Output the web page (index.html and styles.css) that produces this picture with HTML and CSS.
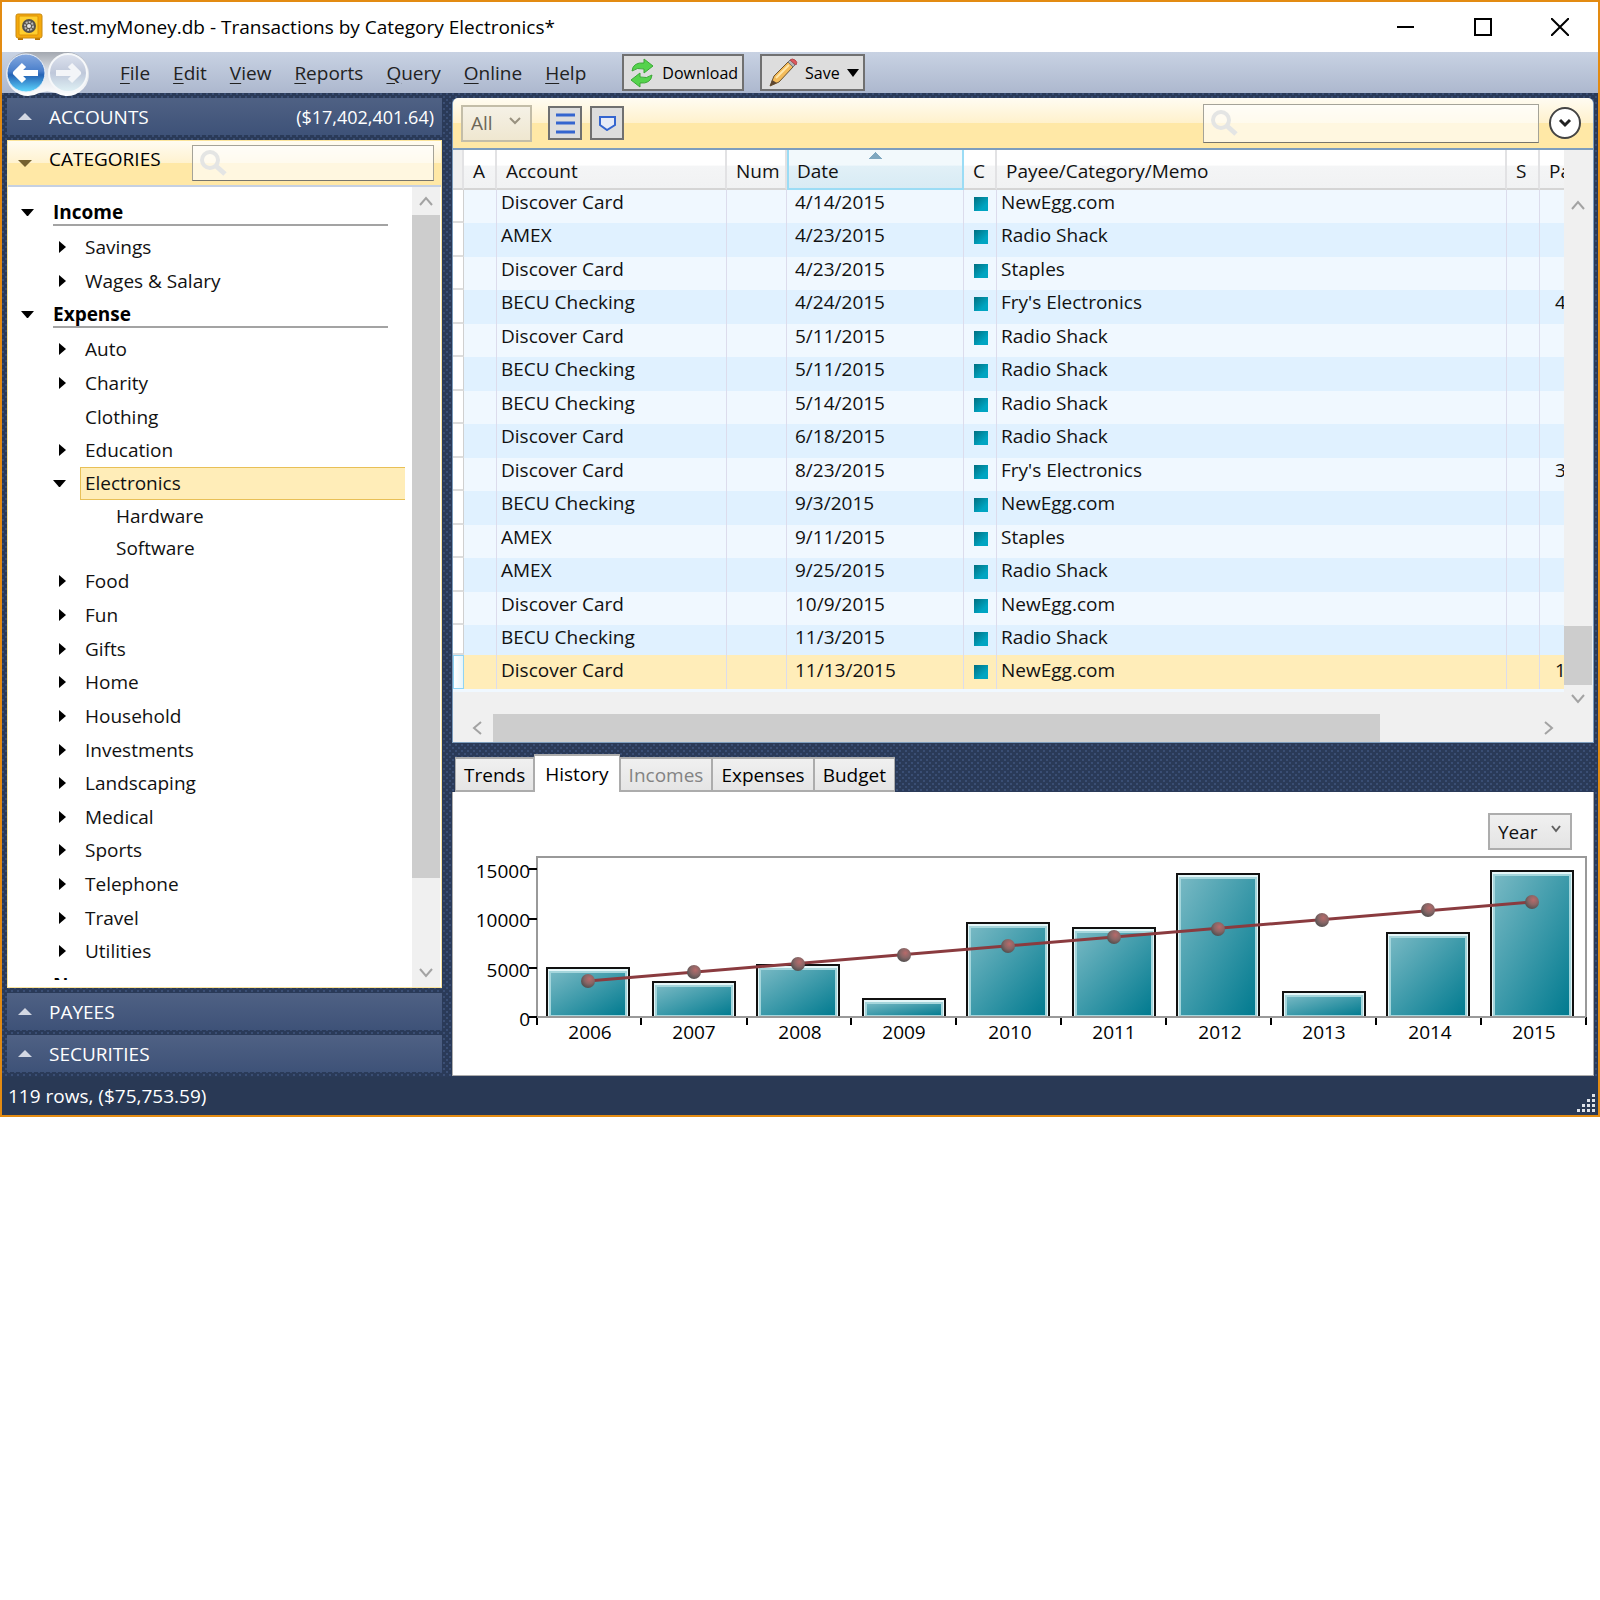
FILE: index.html
```
<!DOCTYPE html>
<html lang="en">
<head>
  <meta charset="UTF-8" />
  <meta name="viewport" content="width=device-width, initial-scale=1" />
  <title>test.myMoney.db</title>
  <link rel="stylesheet" href="styles.css">
</head>
<body>
  <div class="window">
    <header class="titlebar">
      <svg class="app-icon" width="28" height="28" viewBox="0 0 28 28">
        <rect x="3" y="24" width="5" height="3" fill="#b87300"/>
        <rect x="20" y="24" width="5" height="3" fill="#b87300"/>
        <rect x="1" y="1" width="26" height="24" rx="2" fill="#f5a90c" stroke="#c98a12"/>
        <rect x="4" y="3" width="19" height="19" rx="1" fill="#ffcf2e" stroke="#dd9408"/>
        <circle cx="14" cy="13" r="7" fill="#55524c"/>
        <circle cx="14" cy="13" r="4" fill="none" stroke="#b9b9b9" stroke-width="2" stroke-dasharray="2 1"/>
        <circle cx="14" cy="13" r="2" fill="#e6e6e6"/>
      </svg>
      <h1>test.myMoney.db - Transactions by Category Electronics*</h1>
      <div class="window-buttons">
        <button aria-label="Minimize"><svg width="18" height="18" viewBox="0 0 18 18"><path d="M0 9h17" stroke="#000" stroke-width="2"/></svg></button>
        <button aria-label="Maximize"><svg width="18" height="18" viewBox="0 0 18 18"><path d="M1 1h16v16H1z" fill="none" stroke="#000" stroke-width="2"/></svg></button>
        <button aria-label="Close"><svg width="18" height="18" viewBox="0 0 18 18"><path d="M0 0l18 18M18 0L0 18" stroke="#000" stroke-width="2"/></svg></button>
      </div>
    </header>

    <nav class="menubar">
      <div class="history-nav">
        <svg class="history-back" width="88" height="46" viewBox="0 0 88 46">
          <defs>
            <linearGradient id="blue" x1="0" y1="0" x2="0" y2="1">
              <stop offset="0" stop-color="#86a9df"/><stop offset=".45" stop-color="#4a7fcb"/>
              <stop offset=".55" stop-color="#2563b5"/><stop offset="1" stop-color="#5fd8ff"/>
            </linearGradient>
            <linearGradient id="pale" x1="0" y1="0" x2="0" y2="1">
              <stop offset="0" stop-color="#dde2ee"/><stop offset=".5" stop-color="#bfc8da"/>
              <stop offset="1" stop-color="#e0f2f6"/>
            </linearGradient>
            <linearGradient id="ring" x1="0" y1="0" x2="0" y2="1">
              <stop offset="0" stop-color="#a3a8b0"/><stop offset=".4" stop-color="#d9dde3"/>
              <stop offset="1" stop-color="#fff"/>
            </linearGradient>
          </defs>
          <path d="M23 0H65A22 22 0 1 1 53 41Q44 38 36 41A22 22 0 1 1 23 0z" fill="url(#ring)"/>
          <circle cx="23" cy="21" r="19" fill="url(#blue)" stroke="#e9f0f9"/>
          <circle cx="65" cy="21" r="19" fill="url(#pale)" stroke="#f6f8fa" stroke-width="2"/>
          <path d="M35 21H13M21 13l-8 8 8 8" fill="none" stroke="#fff" stroke-width="6" stroke-linejoin="round"/>
          <path d="M53 21h22M67 13l8 8-8 8" fill="none" stroke="#f3f5f8" stroke-width="6" stroke-linejoin="round"/>
        </svg>
        <button aria-label="Back"></button>
        <button aria-label="Forward"></button>
      </div>
      <ul class="menu">
        <li><a href="#"><u>F</u>ile</a></li>
        <li><a href="#"><u>E</u>dit</a></li>
        <li><a href="#"><u>V</u>iew</a></li>
        <li><a href="#"><u>R</u>eports</a></li>
        <li><a href="#"><u>Q</u>uery</a></li>
        <li><a href="#"><u>O</u>nline</a></li>
        <li><a href="#"><u>H</u>elp</a></li>
      </ul>
      <button class="tool tool-download">
        <svg width="24" height="30" viewBox="0 0 24 30">
          <path d="M2 13Q3 4 14 5V1l9 7-9 7v-4Q7 9 2 13z" fill="#55d34c" stroke="#3aa835"/>
          <path d="M22 17Q21 26 10 25v4l-9-7 9-7v4Q17 21 22 17z" fill="#55d34c" stroke="#3aa835"/>
        </svg>
        Download
      </button>
      <button class="tool tool-save">
        <svg width="30" height="30" viewBox="0 0 30 30">
          <path d="M2 28l4-10L20 4l5 5L11 24z" fill="#f3bb5a" stroke="#6b5330"/>
          <path d="M8 20L21 7" stroke="#ffe6a8" stroke-width="2"/>
          <path d="M2 28l2-6 5 3z" fill="#5d4630"/>
          <path d="M20 4l2-2 5 5-2 2z" fill="#b5b5b5" stroke="#777"/>
          <path d="M22 2q2-2 5 0t1 5z" fill="#e0575c" stroke="#b54a4e"/>
        </svg>
        Save
        <svg width="12" height="8" viewBox="0 0 12 8"><path d="M0 0h12L6 8z"/></svg>
      </button>
    </nav>

    <div class="content">
      <aside class="sidebar">
        <button class="section"><i class="up"></i>ACCOUNTS<span class="amount">($17,402,401.64)</span></button>

        <section class="categories">
          <div class="categories-head">
            <i class="down"></i>
            <h2>CATEGORIES</h2>
            <label class="search">
              <svg width="28" height="28" viewBox="0 0 28 28"><circle cx="11" cy="11" r="8" fill="none" stroke="#e4e5e4" stroke-width="4"/><path d="M17 17l9 8" stroke="#e4e5e4" stroke-width="5"/></svg>
              <input type="text" aria-label="Search categories">
            </label>
          </div>
          <div class="categories-body">
            <ul class="tree">
              <li class="group"><div class="node"><i class="open"></i>Income</div>
                <ul>
                  <li><div class="node"><i class="closed"></i>Savings</div></li>
                  <li class="short"><div class="node"><i class="closed"></i>Wages &amp; Salary</div></li>
                </ul>
              </li>
              <li class="group"><div class="node"><i class="open"></i>Expense</div>
                <ul>
                  <li><div class="node"><i class="closed"></i>Auto</div></li>
                  <li><div class="node"><i class="closed"></i>Charity</div></li>
                  <li class="short"><div class="node"><i></i>Clothing</div></li>
                  <li><div class="node"><i class="closed"></i>Education</div></li>
                  <li class="short"><div class="node selected"><i class="open"></i><span>Electronics</span></div>
                    <ul>
                      <li><div class="node">Hardware</div></li>
                      <li><div class="node">Software</div></li>
                    </ul>
                  </li>
                  <li><div class="node"><i class="closed"></i>Food</div></li>
                  <li><div class="node"><i class="closed"></i>Fun</div></li>
                  <li class="short"><div class="node"><i class="closed"></i>Gifts</div></li>
                  <li><div class="node"><i class="closed"></i>Home</div></li>
                  <li><div class="node"><i class="closed"></i>Household</div></li>
                  <li class="short"><div class="node"><i class="closed"></i>Investments</div></li>
                  <li><div class="node"><i class="closed"></i>Landscaping</div></li>
                  <li class="short"><div class="node"><i class="closed"></i>Medical</div></li>
                  <li><div class="node"><i class="closed"></i>Sports</div></li>
                  <li><div class="node"><i class="closed"></i>Telephone</div></li>
                  <li class="short"><div class="node"><i class="closed"></i>Travel</div></li>
                  <li><div class="node"><i class="closed"></i>Utilities</div></li>
                </ul>
              </li>
              <li class="group"><div class="node"><i></i>None</div></li>
            </ul>
            <div class="vscroll">
              <svg width="28" height="28" viewBox="0 0 28 28"><path d="M8 18l6-7 6 7" class="chev"/></svg>
              <div class="thumb"></div>
              <svg width="28" height="28" viewBox="0 0 28 28"><path d="M8 10l6 7 6-7" class="chev"/></svg>
            </div>
          </div>
        </section>

        <button class="section"><i class="up"></i>PAYEES</button>
        <button class="section"><i class="up"></i>SECURITIES</button>
      </aside>

      <main class="main">
        <section class="transactions">
          <div class="toolbar">
            <div class="combo combo-all">
              <select aria-label="Filter" disabled><option>All</option></select>
              <svg width="12" height="8" viewBox="0 0 12 8"><path d="M1 1l5 5 5-5" fill="none" stroke="#98917f" stroke-width="2"/></svg>
            </div>
            <button class="icon-button" aria-label="Lines"><svg width="19" height="21" viewBox="0 0 19 21"><path d="M0 2h19M0 10h19M0 19h19" stroke="#3465cf" stroke-width="3"/></svg></button>
            <button class="icon-button" aria-label="Details"><svg width="17" height="15" viewBox="0 0 17 15"><path d="M1 1h15v8l-8 5-7-5z" fill="#e6ebf7" stroke="#3465cf" stroke-width="2"/></svg></button>
            <label class="search">
              <svg width="28" height="28" viewBox="0 0 28 28"><circle cx="11" cy="11" r="8" fill="none" stroke="#e4e5e4" stroke-width="4"/><path d="M17 17l9 8" stroke="#e4e5e4" stroke-width="5"/></svg>
              <input type="text" aria-label="Search transactions">
            </label>
            <button class="expand" aria-label="Expand"><svg width="14" height="10" viewBox="0 0 14 10"><path d="M2 2l5 5 5-5" fill="none" stroke="#222" stroke-width="3"/></svg></button>
          </div>

          <div class="grid-wrap">
            <div class="grid">
              <table>
                <colgroup>
                  <col class="c-head"><col class="c-a"><col class="c-account"><col class="c-num"><col class="c-date"><col class="c-c"><col><col class="c-s"><col class="c-pay">
                </colgroup>
                <thead>
                  <tr><th class="corner"></th><th>A</th><th>Account</th><th>Num</th><th class="sorted">Date</th><th>C</th><th>Payee/Category/Memo</th><th>S</th><th>Payment</th></tr>
                </thead>
                <tbody>
                  <tr><th></th><td></td><td>Discover Card</td><td></td><td class="date">4/14/2015</td><td><b class="swatch"></b></td><td>NewEgg.com</td><td></td><td></td></tr>
                  <tr><th></th><td></td><td>AMEX</td><td></td><td class="date">4/23/2015</td><td><b class="swatch"></b></td><td>Radio Shack</td><td></td><td></td></tr>
                  <tr><th></th><td></td><td>Discover Card</td><td></td><td class="date">4/23/2015</td><td><b class="swatch"></b></td><td>Staples</td><td></td><td></td></tr>
                  <tr><th></th><td></td><td>BECU Checking</td><td></td><td class="date">4/24/2015</td><td><b class="swatch"></b></td><td>Fry's Electronics</td><td></td><td class="pay">4</td></tr>
                  <tr><th></th><td></td><td>Discover Card</td><td></td><td class="date">5/11/2015</td><td><b class="swatch"></b></td><td>Radio Shack</td><td></td><td></td></tr>
                  <tr><th></th><td></td><td>BECU Checking</td><td></td><td class="date">5/11/2015</td><td><b class="swatch"></b></td><td>Radio Shack</td><td></td><td></td></tr>
                  <tr><th></th><td></td><td>BECU Checking</td><td></td><td class="date">5/14/2015</td><td><b class="swatch"></b></td><td>Radio Shack</td><td></td><td></td></tr>
                  <tr><th></th><td></td><td>Discover Card</td><td></td><td class="date">6/18/2015</td><td><b class="swatch"></b></td><td>Radio Shack</td><td></td><td></td></tr>
                  <tr><th></th><td></td><td>Discover Card</td><td></td><td class="date">8/23/2015</td><td><b class="swatch"></b></td><td>Fry's Electronics</td><td></td><td class="pay">3</td></tr>
                  <tr><th></th><td></td><td>BECU Checking</td><td></td><td class="date">9/3/2015</td><td><b class="swatch"></b></td><td>NewEgg.com</td><td></td><td></td></tr>
                  <tr><th></th><td></td><td>AMEX</td><td></td><td class="date">9/11/2015</td><td><b class="swatch"></b></td><td>Staples</td><td></td><td></td></tr>
                  <tr><th></th><td></td><td>AMEX</td><td></td><td class="date">9/25/2015</td><td><b class="swatch"></b></td><td>Radio Shack</td><td></td><td></td></tr>
                  <tr><th></th><td></td><td>Discover Card</td><td></td><td class="date">10/9/2015</td><td><b class="swatch"></b></td><td>NewEgg.com</td><td></td><td></td></tr>
                  <tr class="before-selected"><th></th><td></td><td>BECU Checking</td><td></td><td class="date">11/3/2015</td><td><b class="swatch"></b></td><td>Radio Shack</td><td></td><td></td></tr>
                  <tr class="selected"><th></th><td></td><td>Discover Card</td><td></td><td class="date">11/13/2015</td><td><b class="swatch"></b></td><td>NewEgg.com</td><td></td><td class="pay">1</td></tr>
                </tbody>
              </table>
              <div class="hscroll">
                <svg width="30" height="28" viewBox="0 0 30 28"><path d="M18 8l-7 6 7 6" class="chev"/></svg>
                <div class="track"><div class="thumb"></div></div>
                <svg width="28" height="28" viewBox="0 0 28 28"><path d="M9 8l7 6-7 6" class="chev"/></svg>
              </div>
            </div>
            <div class="vscroll grid-vscroll">
              <svg width="28" height="28" viewBox="0 0 28 28"><path d="M8 18l6-7 6 7" class="chev"/></svg>
              <div class="thumb"></div>
              <svg width="28" height="28" viewBox="0 0 28 28"><path d="M8 10l6 7 6-7" class="chev"/></svg>
            </div>
          </div>
        </section>

        <section class="charts">
          <div class="tabs">
            <button>Trends</button>
            <button class="active">History</button>
            <button disabled>Incomes</button>
            <button>Expenses</button>
            <button>Budget</button>
          </div>
          <div class="chart-panel">
            <div class="chart-options">
              <div class="combo combo-year">
                <select aria-label="Range"><option>Year</option></select>
                <svg width="10" height="8" viewBox="0 0 10 8"><path d="M1 1l4 5 4-5" fill="none" stroke="#606060" stroke-width="2"/></svg>
              </div>
            </div>
            <svg class="chart" viewBox="0 0 1140 198">
              <defs>
                <linearGradient id="bar" x1="0" y1="0" x2="1" y2="1">
                  <stop offset="0" stop-color="#78b9c4"/><stop offset="1" stop-color="#007a8f"/>
                </linearGradient>
                <radialGradient id="dot" cx=".6" cy=".35" r=".7">
                  <stop offset="0" stop-color="#b86a6a"/><stop offset=".5" stop-color="#866"/><stop offset="1" stop-color="#4d4d4d"/>
                </radialGradient>
              </defs>
              <rect x="84" y="3" width="1049" height="160" class="plot"/>
              <path d="M76 15h8M76 65h8M76 114h8M76 163h8M84 163v8M188 163v8M294 163v8M398 163v8M503 163v8M608 163v8M713 163v8M818 163v8M923 163v8M1028 163v8M1133 163v8" stroke="#000" stroke-width="2"/>
              <g class="frame">
                <rect x="94" y="114" width="82" height="49"/><rect x="200" y="128" width="82" height="35"/>
                <rect x="304" y="111" width="82" height="52"/><rect x="410" y="145" width="82" height="18"/>
                <rect x="514" y="69" width="82" height="94"/><rect x="620" y="74" width="82" height="89"/>
                <rect x="724" y="20" width="82" height="143"/><rect x="830" y="138" width="82" height="25"/>
                <rect x="934" y="79" width="82" height="84"/><rect x="1038" y="17" width="82" height="146"/>
              </g>
              <g class="bar">
                <rect x="97" y="118" width="76" height="44"/><rect x="203" y="132" width="76" height="30"/>
                <rect x="307" y="115" width="76" height="47"/><rect x="413" y="149" width="76" height="13"/>
                <rect x="517" y="73" width="76" height="89"/><rect x="623" y="78" width="76" height="84"/>
                <rect x="727" y="24" width="76" height="138"/><rect x="833" y="142" width="76" height="20"/>
                <rect x="937" y="83" width="76" height="79"/><rect x="1041" y="21" width="76" height="141"/>
              </g>
              <path d="M84 163h1049" stroke="#999" stroke-width="2"/>
              <path d="M135 127L1079 48" stroke="#8a3b3f" stroke-width="3"/>
              <g fill="url(#dot)">
                <circle cx="135" cy="127" r="7"/><circle cx="241" cy="118" r="7"/><circle cx="345" cy="110" r="7"/>
                <circle cx="451" cy="101" r="7"/><circle cx="555" cy="92" r="7"/><circle cx="661" cy="83" r="7"/>
                <circle cx="765" cy="75" r="7"/><circle cx="869" cy="66" r="7"/><circle cx="975" cy="56" r="7"/>
                <circle cx="1079" cy="48" r="7"/>
              </g>
              <g text-anchor="end">
                <text x="77" y="24">15000</text><text x="77" y="73">10000</text>
                <text x="77" y="123">5000</text><text x="77" y="172">0</text>
              </g>
              <g text-anchor="middle">
                <text x="137" y="185">2006</text><text x="241" y="185">2007</text><text x="347" y="185">2008</text>
                <text x="451" y="185">2009</text><text x="557" y="185">2010</text><text x="661" y="185">2011</text>
                <text x="767" y="185">2012</text><text x="871" y="185">2013</text><text x="977" y="185">2014</text>
                <text x="1081" y="185">2015</text>
              </g>
            </svg>
          </div>
        </section>
      </main>
    </div>

    <footer class="statusbar">
      <span>119 rows, ($75,753.59)</span>
      <svg width="20" height="20" viewBox="0 0 20 20" fill="#dfe3ea">
        <path d="M16 1h3v3h-3zM11 6h3v3h-3zM16 6h3v3h-3zM6 11h3v3H6zM11 11h3v3h-3zM16 11h3v3h-3zM1 16h3v3H1zM6 16h3v3H6zM11 16h3v3h-3zM16 16h3v3h-3z"/>
      </svg>
    </footer>
  </div>
</body>
</html>
```
FILE: styles.css
```
* {
  box-sizing: border-box;
}
body {
  margin: 0;
  background: #fff;
  color: #111;
  font-family: "Open Sans", "Noto Sans", sans-serif;
  font-size: 19px;
  line-height: 24px;
}
button, select, input {
  font: inherit;
  color: inherit;
  margin: 0;
  padding: 0;
  border: none;
  border-radius: 0;
  background: none;
}
ul {
  list-style: none;
  margin: 0;
  padding: 0;
}
svg {
  display: block;
  flex-shrink: 0;
}
.chev {
  fill: none;
  stroke: #a3a3a3;
  stroke-width: 2;
}
.window {
  border: 2px solid #e38b12;
  background: #293955;
}

/* title bar */
.titlebar {
  display: flex;
  align-items: center;
  height: 50px;
  padding: 0 29px 0 13px;
  background: #fff;
}
.titlebar h1 {
  flex: 1;
  margin: 0 0 0 8px;
  font-size: 19px;
  font-weight: normal;
  color: #000;
}
.window-buttons {
  display: flex;
  gap: 59px;
}

/* menu */
.menubar {
  display: flex;
  align-items: center;
  height: 41px;
  background: linear-gradient(#c8d2e3, #adb8ce);
}
.history-nav {
  position: relative;
  display: flex;
  width: 90px;
  height: 41px;
}
.history-nav button {
  position: relative;
  width: 44px;
}
.history-back {
  position: absolute;
  left: 1px;
  top: 0;
}
.menu {
  display: flex;
  gap: 23px;
  margin: 0 36px 0 28px;
}
.menu a {
  color: #222;
  text-decoration: none;
}
.menu u {
  text-underline-offset: 3px;
}
.tool {
  display: flex;
  align-items: center;
  height: 37px;
  padding: 0 4px 0 6px;
  border: 2px solid #707070;
  background: #ddd;
  color: #000;
  font-size: 16px;
}
.tool-download {
  gap: 8px;
}
.tool-save {
  gap: 7px;
  margin-left: 16px;
}

/* content */
.content {
  display: flex;
  gap: 10px;
  padding: 5px 4px 0 5px;
  background-color: #2a3a58;
  background-image: radial-gradient(circle at 1px 1px, #3a4e74 1px, transparent 1px), radial-gradient(circle at 4px 4px, #3a4e74 1px, transparent 1px);
  background-size: 6px 6px;
}
.sidebar {
  display: flex;
  flex-direction: column;
  gap: 5px;
  width: 435px;
  flex-shrink: 0;
  padding-bottom: 5px;
}
.section {
  display: flex;
  align-items: center;
  height: 37px;
  padding: 0 8px 0 11px;
  background: linear-gradient(#4f6184, #3e5278);
  color: #fff;
}
.section .amount {
  margin-left: auto;
  font-size: 18px;
}
.up, .down {
  width: 13px;
  margin-right: 17px;
  border-left: 7px solid transparent;
  border-right: 7px solid transparent;
}
.up {
  border-bottom: 7px solid #d3d8e3;
}
.down {
  border-top: 7px solid #75612f;
}
.categories {
  border: 1px solid #fbe49b;
  background: #fff;
}
.categories-head {
  display: flex;
  align-items: center;
  height: 46px;
  padding: 0 7px 0 10px;
  border-bottom: 2px solid #c5d0e2;
  background: linear-gradient(#fffcf2, #fff2cf 50%, #ffe8a6 50%);
}
.categories-head h2 {
  margin: 0;
  padding-bottom: 8px;
  font-size: 19px;
  font-weight: normal;
  color: #000;
}
.search {
  display: flex;
  align-items: center;
  padding: 0 6px;
  border: 1px solid #a5a398;
  border-bottom-color: #77756c;
  background: rgba(255, 255, 255, 0.65);
}
.search input {
  flex: 1;
  min-width: 0;
  outline: none;
}
.categories-head .search {
  width: 242px;
  height: 36px;
  margin-left: auto;
}
.categories-body {
  display: flex;
  justify-content: space-between;
  padding-right: 1px;
}

/* category tree */
.tree {
  width: 397px;
  height: 793px;
  margin-bottom: 7px;
  padding-top: 8px;
  overflow: hidden;
}
.node {
  display: flex;
  align-items: center;
  height: 34px;
}
.short > .node {
  height: 33px;
}
.node i {
  width: 13px;
  margin-right: 19px;
  flex-shrink: 0;
}
.node .open {
  border: 6px solid transparent;
  border-top: 7px solid #000;
  border-bottom: none;
}
.node .closed {
  height: 12px;
  border: 6px solid transparent;
  border-left: 7px solid #000;
  border-right: none;
}
.group > .node {
  width: 380px;
  padding-left: 13px;
  background: linear-gradient(#a3a3a3, #a3a3a3) right 29px / 335px 2px no-repeat;
  font-weight: bold;
  color: #000;
}
.group > ul {
  padding: 1px 0 0 45px;
}
.group > ul .closed {
  width: 7px;
  margin: 0 19px 0 6px;
}
.node.selected i {
  margin-right: 14px;
}
.node.selected span {
  flex: 1;
  height: 33px;
  padding: 3px 0 0 4px;
  border: 1px solid #e8c057;
  border-right: none;
  background: #ffedb8;
}
.group ul ul {
  padding-left: 63px;
}
.group ul ul .node {
  height: 32px;
}

/* scroll bars */
.vscroll {
  display: flex;
  flex-direction: column;
  justify-content: space-between;
  width: 28px;
  background: #f0f0f0;
}
.thumb {
  background: #cdcdcd;
}
.vscroll .thumb {
  height: 663px;
  margin-bottom: auto;
}
.grid-vscroll {
  padding: 41px 0 29px;
}
.grid-vscroll .thumb {
  height: 59px;
  margin: auto 0 0;
}
.hscroll {
  display: flex;
  margin-top: 22px;
  padding-left: 10px;
}
.hscroll .track {
  flex: 1;
}
.hscroll .thumb {
  width: 85%;
  height: 28px;
}

/* transactions */
.main {
  flex: 1;
  min-width: 0;
}
.transactions {
  border: 1px solid #7d9dbd;
  border-top: none;
  border-radius: 6px 6px 0 0;
  background: #f0f0f0;
  overflow: hidden;
}
.toolbar {
  display: flex;
  align-items: center;
  height: 52px;
  padding: 0 12px 0 8px;
  border-bottom: 2px solid #7d9dbd;
  background: linear-gradient(#fffcf2, #fff1cc 50%, #ffe8a6 50%);
}
.combo {
  position: relative;
}
.combo select {
  width: 100%;
  height: 100%;
  padding: 0 8px;
  border: 2px solid #adadad;
  background: linear-gradient(#f0f0f0, #e4e4e4);
  appearance: none;
}
.combo svg {
  position: absolute;
  right: 11px;
  top: 12px;
}
.combo-all {
  width: 71px;
  height: 37px;
  margin-right: 16px;
}
.combo-all select {
  border-color: #c3bda8;
  background: linear-gradient(#f5f1e6, #efe7d0);
  color: #6c6757;
  opacity: 1;
}
.icon-button {
  display: flex;
  align-items: center;
  justify-content: center;
  width: 34px;
  height: 34px;
  margin-right: 8px;
  border: 2px solid #707070;
  background: #ddd;
}
.toolbar .search {
  width: 336px;
  height: 39px;
  margin-left: auto;
}
.expand {
  display: flex;
  align-items: center;
  justify-content: center;
  width: 32px;
  height: 32px;
  margin-left: 10px;
  border: 2px solid #444;
  border-radius: 50%;
  background: #fff;
}
.grid-wrap {
  display: flex;
  padding-right: 1px;
}
.grid {
  flex: 1;
  min-width: 0;
}
table {
  width: 100%;
  table-layout: fixed;
  border-collapse: separate;
  border-spacing: 0;
  border-bottom: 3px solid #f0f8ff;
}
.c-head { width: 11px; }
.c-a { width: 33px; }
.c-account { width: 230px; }
.c-num { width: 60px; }
.c-date { width: 177px; }
.c-c { width: 33px; }
.c-s { width: 33px; }
.c-pay { width: 24px; }
thead th {
  height: 40px;
  padding: 4px 0 0 9px;
  border-right: 2px solid #e2e2e4;
  border-bottom: 2px solid #d5d5d5;
  background: linear-gradient(#fff 40%, #f4f5f6 42%, #f1f2f3);
  font-weight: normal;
  text-align: left;
  white-space: nowrap;
  overflow: hidden;
}
thead .corner {
  background: #f0f0f0;
}
thead th:last-child {
  border-right: none;
}
thead .sorted {
  padding-left: 8px;
  border: 2px solid #9bdcf5;
  border-top: none;
  background:
    conic-gradient(from 135deg at 50% 0, #7fa8c0 90deg, transparent 90deg) center 2px / 14px 7px no-repeat,
    linear-gradient(#f2f9fc 40%, #e1f0f7 42%, #d8ebf4);
}
tbody tr {
  height: 33px;
  background: #f0f8ff;
}
tbody tr:nth-child(even) {
  height: 34px;
  background: #e0f1ff;
}
tbody td {
  padding: 0 4px;
  border-right: 1px solid #dcdcec;
  vertical-align: top;
  white-space: nowrap;
  overflow: hidden;
}
tbody td:last-child {
  border-right: none;
}
tbody th {
  border-right: 1px solid #d0d0d0;
  border-bottom: 2px solid #ddd;
  background: #fff;
}
tbody .date {
  padding-left: 8px;
}
tbody .pay {
  padding: 0 0 0 15px;
}
tbody tr.before-selected {
  height: 30px;
}
tbody tr.selected {
  height: 34px;
  background: #ffedb9;
}
tr.selected td {
  padding-top: 3px;
}
tr.selected th {
  border: 1px solid #8fd4f4;
  background: linear-gradient(90deg, #fff, #e6f4fa);
}
.swatch {
  display: block;
  width: 14px;
  height: 14px;
  margin: 7px 0 0 6px;
  background: linear-gradient(135deg, #006f80, #00a5c2 70%);
}

/* charts */
.charts {
  margin-top: 11px;
}
.tabs {
  display: flex;
  align-items: flex-end;
  height: 38px;
  padding-left: 3px;
}
.tabs button {
  height: 35px;
  padding: 0 8px;
  border: 2px solid #acacac;
  border-left-width: 1px;
  border-right-width: 1px;
  background: linear-gradient(#f0f0f0, #e5e5e5);
  color: #000;
}
.tabs button:disabled {
  color: #838383;
}
.tabs .active {
  height: 38px;
  padding: 0 10px;
  border-bottom: none;
  background: #fff;
}
.chart-panel {
  padding: 21px 0 23px;
  border: 1px solid #acacac;
  border-top: none;
  background: #fff;
}
.chart-options {
  display: flex;
  justify-content: flex-end;
  padding-right: 21px;
}
.combo-year {
  width: 84px;
  height: 37px;
}
.chart {
  width: 100%;
  margin-top: 4px;
}
.chart text {
  font-size: 19px;
}
.plot {
  fill: #fff;
  stroke: #999;
  stroke-width: 2;
}
.frame {
  fill: #e4f6f8;
  stroke: #111;
  stroke-width: 2;
}
.bar {
  fill: url(#bar);
  stroke: #a5d6dc;
  stroke-width: 2;
}

.statusbar {
  display: flex;
  align-items: center;
  justify-content: space-between;
  height: 38px;
  padding: 0 2px 0 6px;
  color: #fff;
}
.statusbar svg {
  align-self: flex-end;
  margin-bottom: 2px;
}
```
